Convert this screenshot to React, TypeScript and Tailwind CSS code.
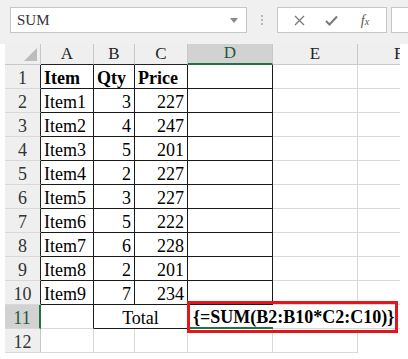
import React from "react";

const cols = ["A", "B", "C", "D", "E", "F"];

const data: [string, number, number][] = [
  ["Item1", 3, 227],
  ["Item2", 4, 247],
  ["Item3", 5, 201],
  ["Item4", 2, 227],
  ["Item5", 3, 227],
  ["Item6", 5, 222],
  ["Item7", 6, 228],
  ["Item8", 2, 201],
  ["Item9", 7, 234],
];

function Toolbar() {
  return (
    <div className="flex h-[44px] items-start bg-[#f0f0f0] pt-[7px] pl-[10px]">
      {/* name box */}
      <div className="flex h-[26px] w-[237px] items-center justify-between border border-[#c6c6c6] bg-white pl-[6px] pr-[8px]">
        <span className="font-['Liberation_Serif',serif] text-[15px] text-[#333]">SUM</span>
        <svg width="8" height="5" viewBox="0 0 8 5">
          <path d="M0 0 L8 0 L4 5 Z" fill="#8a8a8a" />
        </svg>
      </div>
      {/* grip dots */}
      <div className="flex h-[26px] w-[30px] flex-col items-center justify-center gap-[2px]">
        <div className="h-[2px] w-[2px] bg-[#b5b5b5]" />
        <div className="h-[2px] w-[2px] bg-[#b5b5b5]" />
        <div className="h-[2px] w-[2px] bg-[#b5b5b5]" />
      </div>
      {/* formula buttons */}
      <div className="flex h-[26px] w-[110px] items-center border border-[#c6c6c6] bg-white">
        <div className="flex w-[38px] justify-center pl-[4px]">
          <svg width="11" height="11" viewBox="0 0 11 11">
            <path d="M1 1 L10 10 M10 1 L1 10" stroke="#7a7a7a" strokeWidth="1.3" />
          </svg>
        </div>
        <div className="flex w-[30px] justify-center">
          <svg width="13" height="11" viewBox="0 0 13 11">
            <path d="M1 6 L4.5 9.5 L12 1.5" stroke="#7a7a7a" strokeWidth="2" fill="none" />
          </svg>
        </div>
        <div className="flex flex-1 justify-center pr-[2px]">
          <span className="font-['Liberation_Serif',serif] text-[14px] italic text-[#555]">
            f<span className="text-[10px]">x</span>
          </span>
        </div>
      </div>
      <div className="ml-[4px] h-[26px] flex-1 border border-r-0 border-[#c6c6c6] bg-white" />
    </div>
  );
}

function HeaderRow() {
  return (
    <>
      <div className="relative h-[21px] border-r border-b border-[#c8c8c8] bg-[#efefef]">
        <svg className="absolute right-[3px] bottom-[3px]" width="13" height="13" viewBox="0 0 13 13">
          <path d="M13 0 L13 13 L0 13 Z" fill="#bdbdbd" />
        </svg>
      </div>
      {cols.map((c, i) => {
        let cls = "justify-center border-r border-b border-[#c8c8c8] bg-[#efefef] text-[#222]";
        if (i < 3) cls = "justify-center border-r border-r-[#c8c8c8] border-b border-b-[#222] bg-[#efefef] text-[#222]";
        if (c === "D") cls = "justify-center border-r border-r-[#c8c8c8] border-b-2 border-b-[#217346] bg-[#d2d2d2] text-[#1d5a38]";
        if (c === "F") cls = "justify-start overflow-hidden border-b border-[#c8c8c8] bg-[#efefef] pl-[36px] text-[#222]";
        return (
          <div key={c} className={`flex h-[21px] items-end leading-[20px] text-[17px] ${cls}`}>
            {c}
          </div>
        );
      })}
    </>
  );
}

function RowHead({ n }: { n: number }) {
  let cls = "border-r border-r-[#222] bg-[#efefef] text-[#333]";
  if (n === 11) cls = "border-r-2 border-r-[#217346] bg-[#d2d2d2] text-[#1d5a38]";
  if (n === 12) cls = "border-r border-r-[#c8c8c8] bg-[#efefef] text-[#333]";
  return (
    <div className={`flex h-[24px] items-end justify-center border-b border-b-[#d8d8d8] leading-[20px] text-[18px] ${cls}`}>
      {n}
    </div>
  );
}

const black = "border-r border-b border-[#1a1a1a]";
const gray = "border-r border-b border-[#d9d9d9]";

function Cell({ cls, right, children }: { cls: string; right?: boolean; children?: React.ReactNode }) {
  return (
    <div className={`flex h-[24px] items-end whitespace-nowrap px-[3px] leading-[20px] text-[18px] text-black ${right ? "justify-end" : ""} ${cls}`}>
      {children}
    </div>
  );
}

export default function App() {
  return (
    <div className="h-[359px] w-[408px] overflow-hidden bg-white font-['Liberation_Serif',serif]">
      <Toolbar />
      <div className="ml-[5px] grid w-[395px] grid-cols-[36px_53px_41px_53px_85px_85px_42px]">
        <HeaderRow />

        {/* row 1 */}
        <RowHead n={1} />
        <Cell cls={black}><b>Item</b></Cell>
        <Cell cls={black}><b>Qty</b></Cell>
        <Cell cls={black}><b>Price</b></Cell>
        <Cell cls={black} />
        <Cell cls={gray} />
        <Cell cls="border-b border-[#d9d9d9]" />

        {data.map(([item, qty, price], i) => (
          <React.Fragment key={item}>
            <RowHead n={i + 2} />
            <Cell cls={black}>{item}</Cell>
            <Cell cls={black} right>{qty}</Cell>
            <Cell cls={black} right>{price}</Cell>
            <Cell cls={black} />
            <Cell cls={gray} />
            <Cell cls="border-b border-[#d9d9d9]" />
          </React.Fragment>
        ))}

        {/* row 11 */}
        <RowHead n={11} />
        <Cell cls="border-r border-r-[#1a1a1a] border-b border-b-[#d9d9d9]" />
        <div className="col-span-2 flex h-[24px] items-end justify-center border-r border-b border-[#1a1a1a] leading-[20px] text-[18px] text-black">
          Total
        </div>
        <div className="relative h-[24px] border-b-2 border-b-[#217346]">
          {/* highlighted array formula */}
          <div className="absolute top-[-4px] left-[-1px] z-10 flex h-[32px] w-[211px] items-center border-[3px] border-[#e3161b] pl-[3px]">
            <span className="whitespace-nowrap text-[18px] font-bold leading-[20px] text-black">
              {"{=SUM(B2:B10*C2:C10)}"}
            </span>
            <span className="ml-[1px] h-[20px] w-px bg-black" />
          </div>
        </div>
        <Cell cls="border-b border-[#d9d9d9]" />
        <Cell cls="border-b border-[#d9d9d9]" />

        {/* row 12 */}
        <RowHead n={12} />
        <Cell cls={gray} />
        <Cell cls={gray} />
        <Cell cls={gray} />
        <Cell cls={gray} />
        <Cell cls={gray} />
        <Cell cls="border-b border-transparent" />
      </div>
    </div>
  );
}
